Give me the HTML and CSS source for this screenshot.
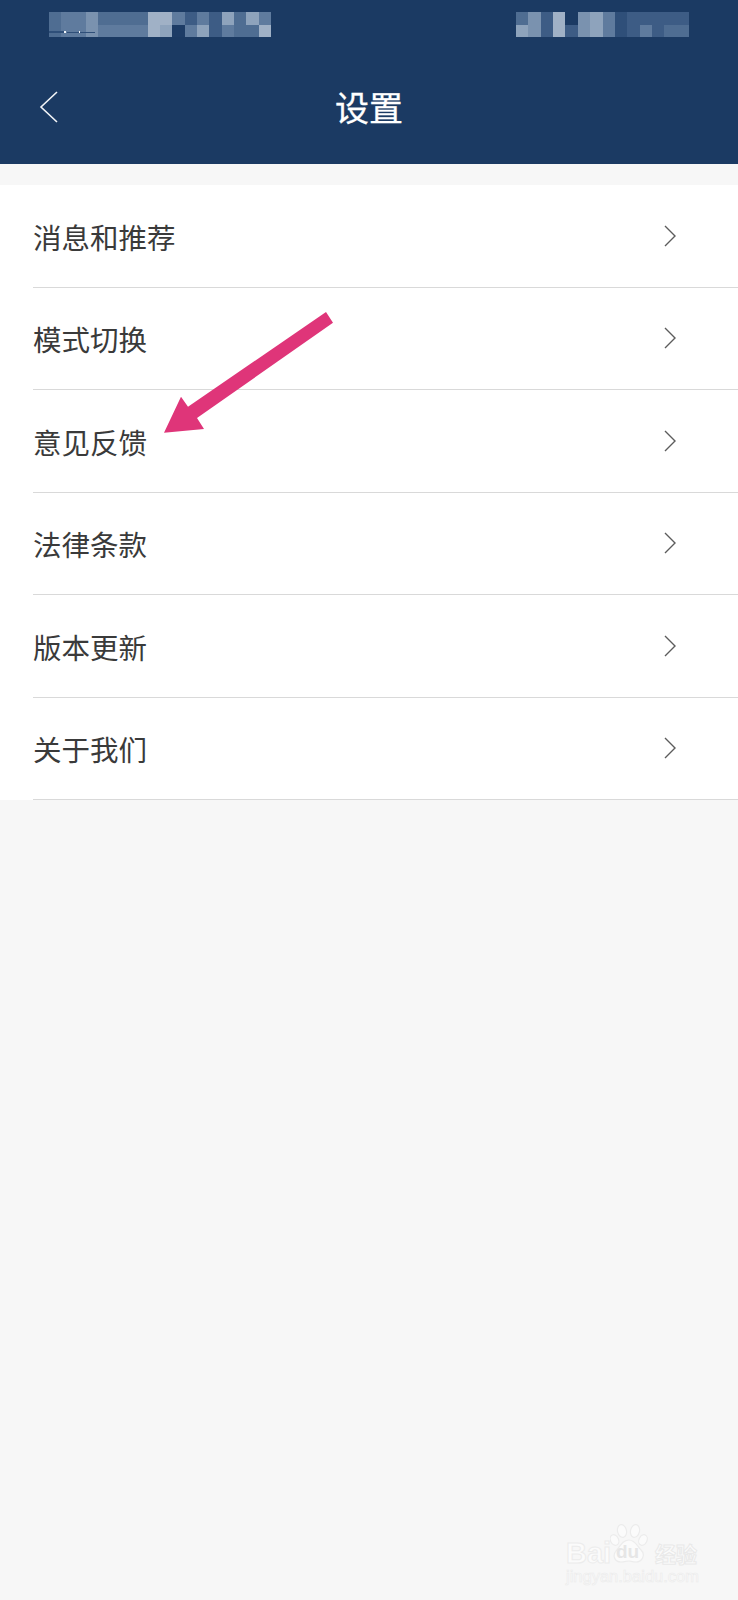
FILE: index.html
```html
<!DOCTYPE html>
<html lang="zh-CN">
<head>
<meta charset="utf-8">
<title>设置</title>
<link rel="stylesheet" href="styles.css">
</head>
<body>
<div class="page">
  <header class="topbar">
    <div class="status">
      <svg class="mosaic-left" width="222" height="25" viewBox="0 0 18 2" preserveAspectRatio="none" shape-rendering="crispEdges">
        <g class="s2"><rect x="0" y="0" width="1" height="2"/><rect x="4" y="0" width="4" height="1"/><rect x="15" y="0" width="1" height="2"/><rect x="16" y="1" width="1" height="1"/></g>
        <g class="s3"><rect x="1" y="0" width="2" height="2"/><rect x="4" y="1" width="4" height="1"/><rect x="10" y="0" width="1" height="1"/><rect x="11" y="1" width="1" height="1"/><rect x="12" y="0" width="1" height="1"/><rect x="14" y="1" width="1" height="1"/><rect x="17" y="0" width="1" height="1"/></g>
        <g class="s4"><rect x="3" y="0" width="1" height="2"/></g>
        <g class="s5"><rect x="14" y="0" width="1" height="1"/><rect x="16" y="0" width="1" height="1"/><rect x="12" y="1" width="1" height="1"/><rect x="9" y="1" width="1" height="1"/></g>
        <g class="s6"><rect x="8" y="0" width="2" height="1"/><rect x="8" y="1" width="1" height="1"/><rect x="17" y="1" width="1" height="1"/></g>
        <g class="s1"><rect x="11" y="0" width="1" height="1"/><rect x="13" y="0" width="1" height="2"/></g>
        <g class="s0"><rect x="10" y="1" width="1" height="1"/></g>
        <g class="s0b"><rect x="0" y="1.52" width="1.2" height="0.12"/><rect x="1.45" y="1.56" width="2.3" height="0.08"/></g>
        <g class="sw"><rect x="1.25" y="1.5" width="0.16" height="0.18"/><rect x="2.45" y="1.54" width="0.1" height="0.12"/></g>
      </svg>
      <svg class="mosaic-right" width="173" height="25" viewBox="0 0 14 2" preserveAspectRatio="none" shape-rendering="crispEdges">
        <g class="s2"><rect x="0" y="0" width="1" height="1"/><rect x="12" y="1" width="2" height="1"/></g>
        <g class="s4"><rect x="1" y="0" width="1" height="2"/><rect x="5" y="0" width="1" height="2"/></g>
        <g class="s5"><rect x="0" y="1" width="1" height="1"/><rect x="6" y="0" width="1" height="2"/></g>
        <g class="s1"><rect x="2" y="0" width="1" height="2"/><rect x="4" y="1" width="1" height="1"/><rect x="9" y="0" width="5" height="1"/><rect x="9" y="1" width="1" height="1"/><rect x="11" y="1" width="1" height="1"/></g>
        <g class="s6"><rect x="3" y="0" width="1" height="2"/></g>
        <g class="s3"><rect x="7" y="0" width="1" height="2"/><rect x="10" y="1" width="1" height="1"/></g>
        <g class="s0b"><rect x="8" y="0" width="1" height="2"/></g>
      </svg>
    </div>
    <div class="navbar">
      <svg class="back" width="20" height="32" viewBox="0 0 20 32"><path d="M18 1 L2 16 L18 31"/></svg>
      <h1 class="title">设置</h1>
    </div>
  </header>

  <ul class="menu">
    <li class="row"><span class="label">消息和推荐</span><svg class="chev" width="12" height="22" viewBox="0 0 12 22"><path d="M1 1 L11 11 L1 21"/></svg></li>
    <li class="row"><span class="label">模式切换</span><svg class="chev" width="12" height="22" viewBox="0 0 12 22"><path d="M1 1 L11 11 L1 21"/></svg></li>
    <li class="row"><span class="label">意见反馈</span><svg class="chev" width="12" height="22" viewBox="0 0 12 22"><path d="M1 1 L11 11 L1 21"/></svg></li>
    <li class="row"><span class="label">法律条款</span><svg class="chev" width="12" height="22" viewBox="0 0 12 22"><path d="M1 1 L11 11 L1 21"/></svg></li>
    <li class="row"><span class="label">版本更新</span><svg class="chev" width="12" height="22" viewBox="0 0 12 22"><path d="M1 1 L11 11 L1 21"/></svg></li>
    <li class="row"><span class="label">关于我们</span><svg class="chev" width="12" height="22" viewBox="0 0 12 22"><path d="M1 1 L11 11 L1 21"/></svg></li>
  </ul>

  <svg class="arrow" width="738" height="450" viewBox="0 0 738 450">
    <polygon points="164,432.7 181,396.7 188,406.7 326,312 333,322.7 197,418 204,429"/>
  </svg>

  <div class="watermark">
    <div class="wm-top">
      <span class="wm-bai">Bai</span>
      <svg class="wm-paw" width="40" height="44" viewBox="0 0 40 44">
        <ellipse cx="12" cy="10" rx="4.5" ry="6.5" transform="rotate(-12 12 10)"/>
        <ellipse cx="25" cy="10" rx="4.5" ry="6.5" transform="rotate(12 25 10)"/>
        <ellipse cx="4.5" cy="19" rx="4" ry="5.5" transform="rotate(-25 4.5 19)"/>
        <ellipse cx="33" cy="19" rx="4" ry="5.5" transform="rotate(25 33 19)"/>
        <path d="M19 19 C25 19 27 25 31 29 C36 34 32 41 26 41 C22 41 21 40 19 40 C16 40 15 41 11 41 C5 41 2 35 6 30 C10 26 12 19 19 19 Z"/>
      </svg>
      <span class="wm-du">du</span>
      <span class="wm-cn">经验</span>
    </div>
    <div class="wm-url">jingyan.baidu.com</div>
  </div>
</div>
</body>
</html>
```
FILE: styles.css
```css
* { box-sizing: border-box; }
html, body { margin: 0; padding: 0; }
body {
  width: 738px;
  height: 1600px;
  overflow: hidden;
  background: #f7f7f7;
  font-family: "Noto Sans CJK SC", "Noto Sans", sans-serif;
}
.page { position: relative; width: 738px; height: 1600px; }

.topbar { height: 164px; background: #1b3a63; }
.status {
  display: flex;
  justify-content: space-between;
  align-items: flex-start;
  padding: 12px 49px 0 49px;
  height: 37px;
}
.s0 { fill: #1d3c66; }
.s0b { fill: #2f4f79; }
.sw { fill: #f4f6f9; }
.s1 { fill: #3d5c85; }
.s2 { fill: #4f6d92; }
.s3 { fill: #5f7b9e; }
.s4 { fill: #7a92af; }
.s5 { fill: #8ea3bc; }
.s6 { fill: #a0b1c6; }

.navbar {
  position: relative;
  height: 127px;
  padding-top: 13px;
  display: flex;
  align-items: center;
  justify-content: center;
}
.back { position: absolute; left: 39px; top: 54px; }
.back path { fill: none; stroke: #f2f4f7; stroke-width: 1.6; }
.title {
  margin: 0;
  font-size: 34px;
  line-height: 44px;
  font-weight: 400;
  color: #fff;
  -webkit-text-stroke: 0.3px #fff;
}

.menu {
  list-style: none;
  margin: 21px 0 0 0;
  padding: 0;
  background: #fff;
}
.row {
  height: 102.5px;
  margin: 0 0 0 33px;
  padding: 0 62px 0 0;
  display: flex;
  align-items: center;
  justify-content: space-between;
  border-bottom: 1px solid #d9d9d9;
}
.label { font-size: 28.5px; line-height: 40px; padding-top: 2px; color: #3a3a3a; }
.chev path { fill: none; stroke: #5c5c5c; stroke-width: 1.4; }

.arrow { position: absolute; left: 0; top: 0; }
.arrow polygon { fill: #df3579; }

.watermark { position: absolute; left: 566px; top: 1519px; width: 135px; }
.wm-top { position: relative; display: flex; height: 46px; align-items: flex-end; }
.wm-bai {
  font-family: "Liberation Sans", sans-serif;
  font-weight: 700;
  font-size: 29px;
  line-height: 30px;
  color: #fbfbfb;
  -webkit-text-stroke: 1px #ececec;
  width: 44px;
  margin-bottom: -3px;
}
.wm-paw { flex: none; fill: #fbfbfb; stroke: #ececec; stroke-width: 1.2; }
.wm-du {
  position: absolute;
  left: 50px;
  top: 24px;
  font-family: "Liberation Sans", sans-serif;
  font-weight: 700;
  font-size: 19px;
  line-height: 18px;
  color: #e6e6e6;
}
.wm-cn {
  font-size: 21px;
  line-height: 24px;
  font-weight: 700;
  color: #fbfbfb;
  -webkit-text-stroke: 1px #e9e9e9;
  margin-left: 5px;
  white-space: nowrap;
}
.wm-url {
  font-family: "Liberation Sans", sans-serif;
  font-size: 16.5px;
  line-height: 18px;
  color: #fbfbfb;
  -webkit-text-stroke: 0.6px #ebebeb;
  margin-top: 2px;
  white-space: nowrap;
}
```
